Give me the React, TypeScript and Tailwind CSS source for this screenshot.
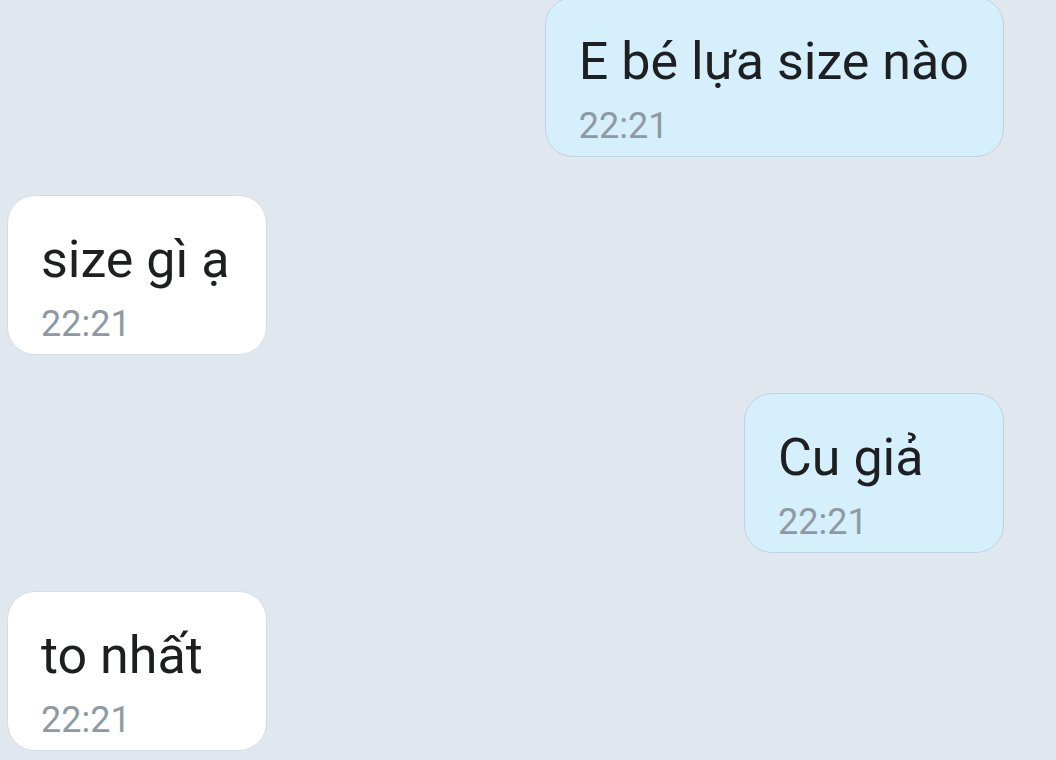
const messages = [
  { text: "E bé lựa size nào", time: "22:21", mine: true },
  { text: "size gì ạ", time: "22:21", mine: false },
  { text: "Cu giả", time: "22:21", mine: true },
  { text: "to nhất", time: "22:21", mine: false },
]

function Bubble({ text, time, mine }: { text: string; time: string; mine: boolean }) {
  return (
    <div
      className={`min-w-[260px] h-[160px] rounded-[28px] border-[1.5px] pl-[33px] pr-[34px] pt-[35px] ${
        mine ? "self-end bg-[#d5effd] border-[#bcd4e2]" : "self-start bg-white border-[#d6dce2]"
      }`}
    >
      <div className="text-[52px] leading-[58px] text-[#1e1f21] whitespace-nowrap">{text}</div>
      <div className="mt-[14px] text-[36px] leading-[42px] text-[#8e9aa3]">{time}</div>
    </div>
  )
}

export default function App() {
  return (
    <div className="w-[1056px] h-[760px] overflow-hidden bg-[#e1e7ef]" style={{ fontFamily: "Roboto, 'Noto Sans', sans-serif" }}>
      <div className="flex flex-col gap-[38px] pl-[7px] pr-[52px] -mt-[3px]">
        {messages.map((m, i) => (
          <Bubble key={i} {...m} />
        ))}
      </div>
    </div>
  )
}
